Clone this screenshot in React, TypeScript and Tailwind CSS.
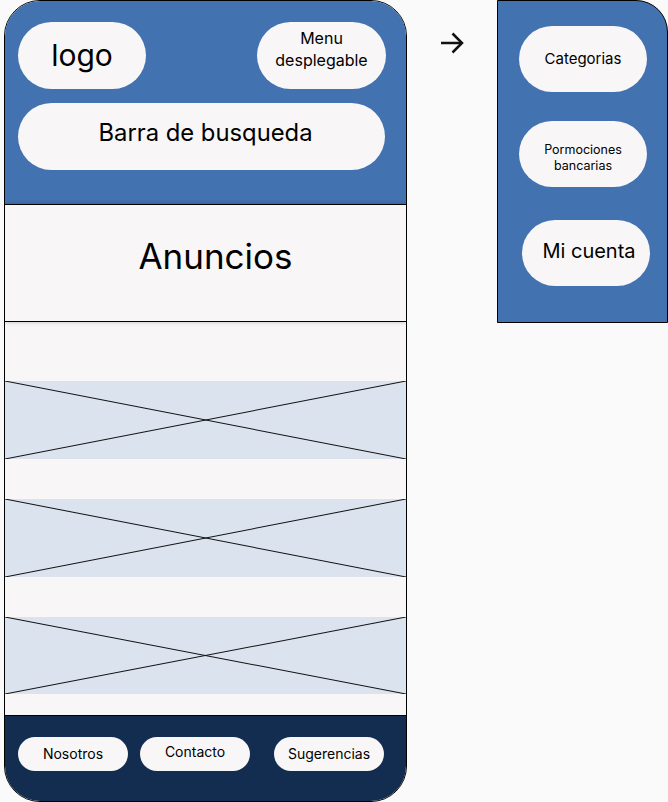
import React from "react";

const Cross = () => (
  <svg className="absolute inset-0 h-full w-full" viewBox="0 0 100 100" preserveAspectRatio="none">
    <line x1="0" y1="0" x2="100" y2="100" stroke="#111" strokeWidth="1" vectorEffect="non-scaling-stroke" />
    <line x1="0" y1="100" x2="100" y2="0" stroke="#111" strokeWidth="1" vectorEffect="non-scaling-stroke" />
  </svg>
);

export default function App() {
  return (
    <div
      className="flex h-[802px] w-[668px] items-start bg-[#fafafa] text-black"
      style={{ fontFamily: "Inter, 'Noto Sans', sans-serif" }}
    >
      {/* Phone */}
      <div className="ml-[4px] flex h-[802px] w-[403px] flex-col overflow-hidden rounded-[36px] border border-black bg-[#f8f6f7]">
        {/* Header */}
        <div className="flex h-[203px] shrink-0 flex-col bg-[#4272b0] pl-[13px] pr-[20px] pt-[21px]">
          <div className="flex justify-between">
            <div className="flex h-[67px] w-[128px] items-center justify-center rounded-full bg-[#f8f6f7] pb-[2px] text-[30px] leading-none">
              logo
            </div>
            <div className="flex h-[67px] w-[129px] items-center justify-center rounded-full bg-[#f8f6f7] pb-[14px] text-center text-[16px] leading-[22px]">
              Menu
              <br />
              desplegable
            </div>
          </div>
          <div className="mt-[14px] flex h-[67px] w-[367px] items-center justify-center rounded-full bg-[#f8f6f7] pb-[8px] pl-[8px] text-[23.8px] leading-none">
            Barra de busqueda
          </div>
        </div>
        {/* Anuncios */}
        <div className="h-[118px] shrink-0 border-y border-black bg-[#f8f6f7] pl-[20px] pt-[29px] text-center text-[35px] leading-[44px] shadow-[0_0_4px_rgba(0,0,0,0.25)]">
          Anuncios
        </div>
        <div className="h-[59px] shrink-0" />
        <div className="relative h-[78px] shrink-0 bg-[#dbe3ef]">
          <Cross />
        </div>
        <div className="h-[40px] shrink-0" />
        <div className="relative h-[78px] shrink-0 bg-[#dbe3ef]">
          <Cross />
        </div>
        <div className="h-[40px] shrink-0" />
        <div className="relative h-[77px] shrink-0 bg-[#dbe3ef]">
          <Cross />
        </div>
        <div className="h-[21px] shrink-0" />
        {/* Footer */}
        <div className="flex flex-1 items-start border-t border-black bg-[#122d4f] pl-[13px] pt-[21px]">
          <div className="flex h-[34px] w-[110px] items-center justify-center rounded-full bg-[#f8f6f7] pb-[2px] text-[14px]">
            Nosotros
          </div>
          <div className="ml-[12px] flex h-[34px] w-[110px] items-center justify-center rounded-full bg-[#f8f6f7] pb-[6px] text-[14px]">
            Contacto
          </div>
          <div className="ml-[24px] flex h-[34px] w-[110px] items-center justify-center rounded-full bg-[#f8f6f7] pb-[2px] text-[14px]">
            Sugerencias
          </div>
        </div>
      </div>

      {/* Arrow */}
      <div className="ml-[33px] mt-[31px] h-[24px] w-[24px]">
        <svg width="24" height="24" viewBox="0 0 24 24" fill="none" stroke="#111" strokeWidth="2.5" strokeLinecap="butt">
          <line x1="1" y1="12" x2="22" y2="12" />
          <polyline points="12.5,2.5 22,12 12.5,21.5" />
        </svg>
      </div>

      {/* Side menu panel */}
      <div className="ml-[33px] flex h-[323px] w-[171px] flex-col rounded-tr-[32px] border border-black bg-[#4272b0] pl-[21px] pt-[25px]">
        <div className="flex h-[66px] w-[128px] items-center justify-center rounded-full bg-[#f8f6f7] text-[15px]">
          Categorias
        </div>
        <div className="mt-[29px] flex h-[66px] w-[128px] flex-col items-center justify-center rounded-full bg-[#f8f6f7] pt-[7px] text-center text-[12.5px] leading-[16px]">
          <span>Pormociones</span>
          <span>bancarias</span>
        </div>
        <div className="ml-[3px] mt-[33px] flex h-[66px] w-[128px] items-center justify-center rounded-full bg-[#f8f6f7] pb-[5px] pl-[6px] text-[20px]">
          Mi cuenta
        </div>
      </div>
    </div>
  );
}
